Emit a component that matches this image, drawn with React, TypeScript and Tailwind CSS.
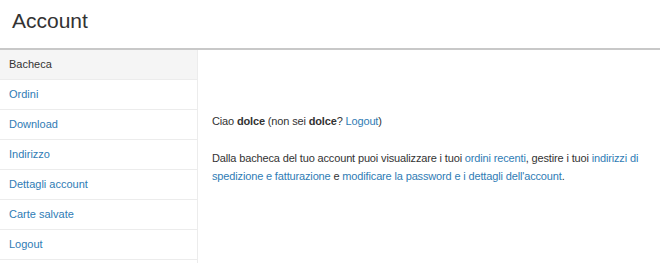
import React from 'react';

const navItems = ['Bacheca', 'Ordini', 'Download', 'Indirizzo', 'Dettagli account', 'Carte salvate', 'Logout'];

export default function App() {
  return <div className="w-[660px] h-[275px] bg-white text-[#333] overflow-hidden" style={{ fontFamily: '"Liberation Sans", Arial, sans-serif' }}>
    <div className="h-[50px] border-b-2 border-[#c8c8c8] pl-3 pt-[8px]">
      <h1 className="text-[21px] leading-[26px] text-[#333]">Account</h1>
    </div>

    <div className="flex">
      <nav className="w-[198px] shrink-0 border-r border-[#ececec] pb-[3px]">
        {navItems.map((item, i) =>
        <div
          key={item}
          className={`h-[30px] flex items-center pl-[9px] border-b border-[#ececec] text-[11px] ${i === 0 ? 'bg-[#f5f5f5] text-[#333]' : 'text-[#2f7cb5]'}`}>
            {item}
          </div>
        )}
      </nav>

      <div className="pl-[14px] pr-[6px] pt-[62px] text-[11px] leading-[18px] tracking-[-0.15px]">
        <p>
          Ciao <strong>dolce</strong> (non sei <strong>dolce</strong>? <a className="text-[#2f7cb5]">Logout</a>)
        </p>
        <p className="mt-[19px]">
          Dalla bacheca del tuo account puoi visualizzare i tuoi <a className="text-[#2f7cb5]">ordini recenti</a>, gestire i tuoi <a className="text-[#2f7cb5]">indirizzi di spedizione e fatturazione</a> e <a className="text-[#2f7cb5]">modificare la password e i dettagli dell'account</a>.
        </p>
      </div>
    </div>
  </div>;
}
